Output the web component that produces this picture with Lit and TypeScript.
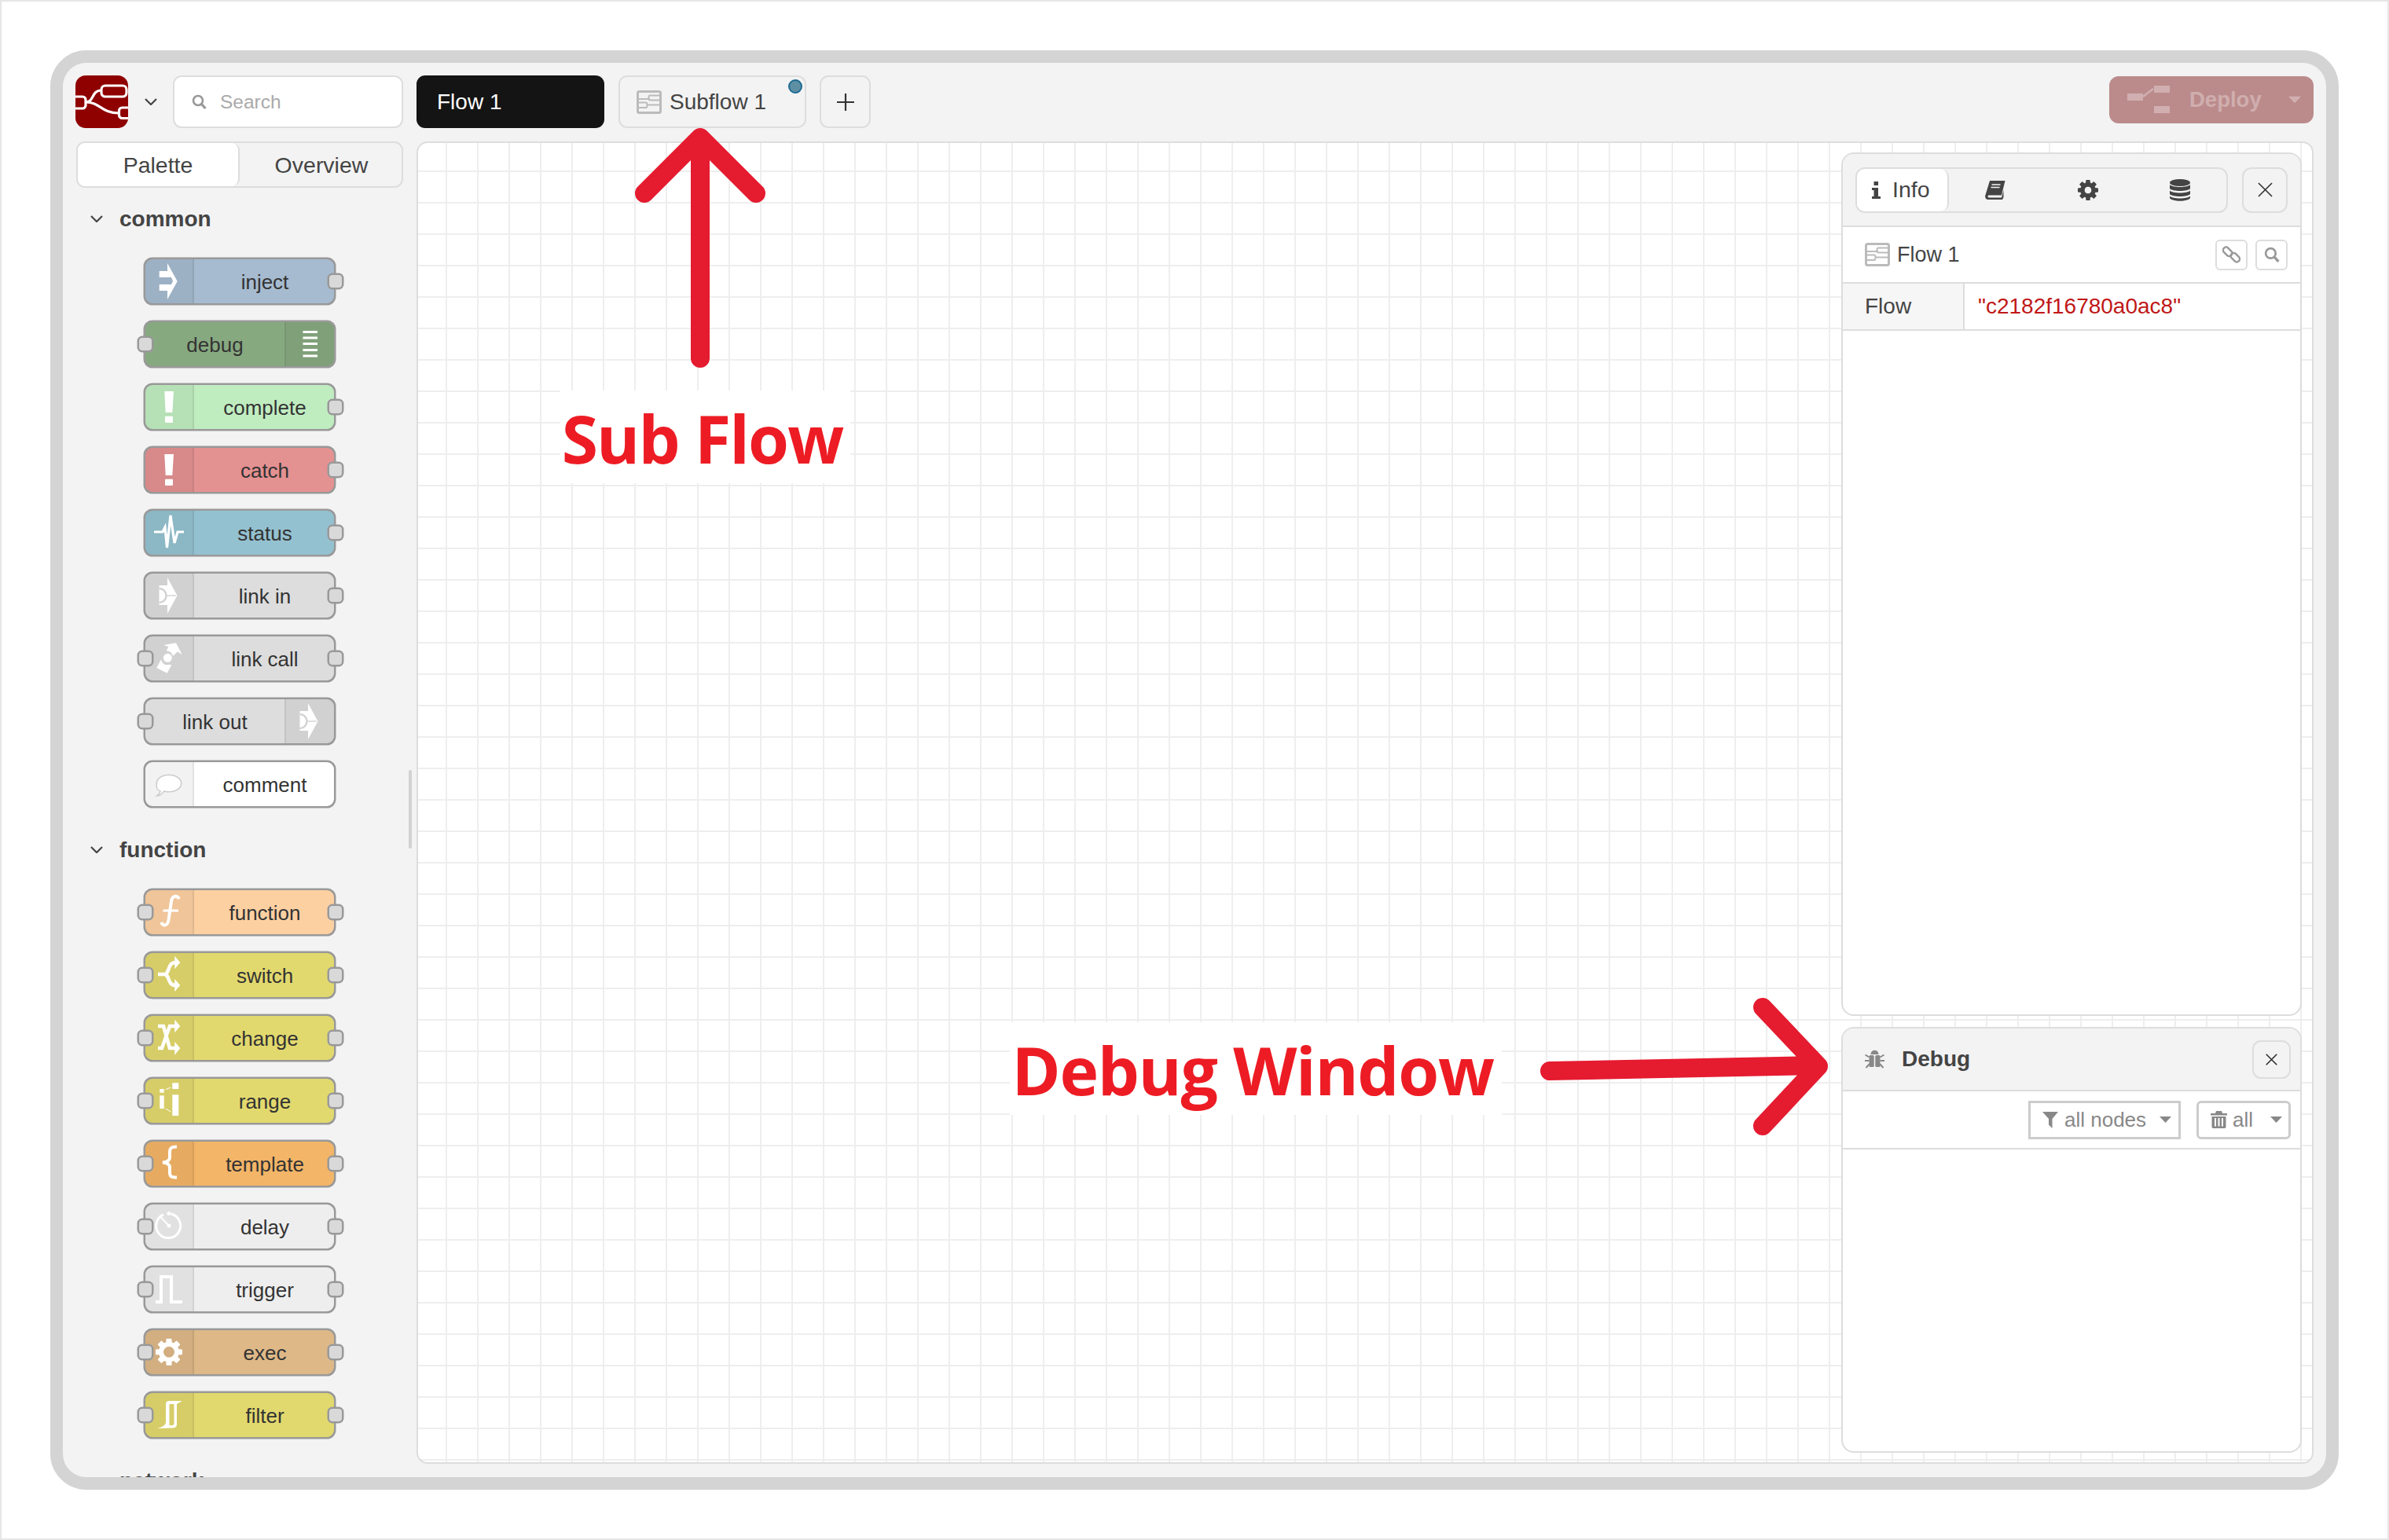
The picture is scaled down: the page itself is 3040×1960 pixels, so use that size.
import { LitElement, html, css, svg } from "lit";
import { customElement } from "lit/decorators.js";

const gear = (cx: number, cy: number, r: number, hole: number, fill: string) => {
  const body = r * 0.76;
  const w = r * 0.42;
  const teeth = [0, 45, 90, 135, 180, 225, 270, 315].map(
    (a) => svg`<rect x=${cx - w / 2} y=${cy - r} width=${w} height=${r - hole} rx="1" fill=${fill} transform="rotate(${a} ${cx} ${cy})"></rect>`
  );
  return svg`${teeth}<circle cx=${cx} cy=${cy} r=${(body + hole) / 2} fill="none" stroke=${fill} stroke-width=${body - hole}></circle>`;
};

const linkArrow = (cut: string) => svg`
  <path d="M28 5L40.5 28L28 51V40H17.5V15H28Z" fill="#fff"></path>
  <path d="M17.5 19A9 9 0 0 1 17.5 37" fill="none" stroke=${cut} stroke-width="2.400"></path>
  <path d="M26 28H39" stroke=${cut} stroke-width="1.400"></path>`;

const ICONS: Record<string, unknown> = {
  inject: svg`<path d="M28 5L40.7 28L28 51V40H17.7V32H33L35 28L33 23H17.7V15H28Z" fill="#fff"></path>`,
  debug: svg`<g fill="#fff"><rect x="21.5" y="11" width="18.5" height="3"></rect><rect x="21.5" y="18.5" width="18.5" height="3"></rect><rect x="21.5" y="26" width="18.5" height="3"></rect><rect x="21.5" y="34" width="18.5" height="3"></rect><rect x="21.5" y="41.5" width="18.5" height="3"></rect></g>`,
  alert: svg`<path d="M24.3 8H36L34.3 35H25.7Z" fill="#fff"></path><rect x="25" y="39.7" width="10" height="8.3" rx="1" fill="#fff"></rect>`,
  status: svg`<polyline points="11,27 22,27 25,21 27.5,47 32,6 37,41 41,27 49,27" fill="none" stroke="#fff" stroke-width="3.2" stroke-linejoin="miter"></polyline>`,
  linkin: linkArrow("#d2d2d2"),
  linkcall: svg`<path d="M23.3 11L39 8.3L46.7 23.3L41 19.3L35 25A9 9 0 0 0 26.7 18.3L29.3 13.3Z" fill="#fff"></path><circle cx="28.3" cy="27.3" r="5.5" fill="#fff"></circle><path d="M20 29.3A9.5 9.5 0 0 0 25 36H33.3L27.7 46.7L14.3 40Z" fill="#fff"></path>`,
  linkout: linkArrow("#d2d2d2"),
  comment: svg`<path d="M19 37C13 35 14.300 30 14.300 27C14.300 21 21 16.200 30 16.200C38.700 16.200 45.700 21 45.700 27C45.700 33 38.700 37.800 30 37.800C27.500 37.800 25 37.500 23.500 37C22 40 18 43 14.500 43C17 41 19 39 19 37Z" fill="#fff" stroke="#ccc" stroke-width="1.6"></path>`,
  function: svg`<path d="M43 11C40 6 34 7 33 14L29.5 38C28 46 23 46 20 41" fill="none" stroke="#fff" stroke-width="4"></path><path d="M22.500 26H42" stroke="#fff" stroke-width="3"></path>`,
  switch: svg`<path d="M16 27H24C31 27 28 12 38 12M24 27C31 27 28 41 38 41" fill="none" stroke="#fff" stroke-width="4.500"></path><path d="M37.300 3.700L44.300 12L37.300 20.300ZM37.300 33L44.300 41L37.300 49Z" fill="#fff"></path>`,
  change: svg`<path d="M16 13H23L31 41H38M16 41H21L31 13H38" fill="none" stroke="#fff" stroke-width="4.500"></path><path d="M37.300 4.700L44.300 13L37.300 21.300ZM37.300 33L44.300 41L37.300 49.700Z" fill="#fff"></path>`,
  range: svg`<g fill="#fff"><rect x="18.300" y="13" width="5.400" height="4.700"></rect><rect x="18.300" y="21.300" width="5.400" height="16.700"></rect><rect x="34.300" y="5.300" width="8" height="7.700"></rect><rect x="34.300" y="20.300" width="8" height="26.700"></rect></g><path d="M25.700 13.700L32.300 11M25.700 38L32.300 42" stroke="#fff" stroke-width="1"></path>`,
  template: svg`<path d="M40 6.500C32 6.500 31 9 31 14V20C31 24 28 26 22 26.500C28 27 31 29 31 33V39C31 44 32 45.500 40 45.500" fill="none" stroke="#fff" stroke-width="4"></path>`,
  delay: svg`<path d="M23 12.800A15.500 15.500 0 1 0 33 12" fill="none" stroke="#fff" stroke-width="3"></path><circle cx="30" cy="11.500" r="2.500" fill="#fff"></circle><path d="M30.500 27.500L19 15.500L18 15" stroke="#fff" stroke-width="2"></path><circle cx="30" cy="27" r="2.500" fill="#fff"></circle>`,
  trigger: svg`<path d="M13 44H20V12H33V44H47" fill="none" stroke="#fff" stroke-width="4"></path>`,
  exec: gear(30, 27.7, 17, 7, "#fff"),
  filter: svg`<path fill-rule="evenodd" d="M46.700 10L30 10Q26 10 26 14V37C26 41 20 44 14.500 45L33 44.500Q40 44.500 40 40V14ZM30.500 14H36.500V39Q36.500 41 33 41H30.500Z" fill="#fff"></path>`,
};

type NodeDef = { label: string; cls: string; icon: string; ports: string; right?: boolean };

const COMMON: NodeDef[] = [
  { label: "inject", cls: "inject", icon: "inject", ports: "o" },
  { label: "debug", cls: "debug", icon: "debug", ports: "i", right: true },
  { label: "complete", cls: "complete", icon: "alert", ports: "o" },
  { label: "catch", cls: "catch", icon: "alert", ports: "o" },
  { label: "status", cls: "status", icon: "status", ports: "o" },
  { label: "link in", cls: "link", icon: "linkin", ports: "o" },
  { label: "link call", cls: "link", icon: "linkcall", ports: "io" },
  { label: "link out", cls: "link", icon: "linkout", ports: "i", right: true },
  { label: "comment", cls: "comment", icon: "comment", ports: "" },
];
const FUNCTION: NodeDef[] = [
  { label: "function", cls: "fn", icon: "function", ports: "io" },
  { label: "switch", cls: "yellow", icon: "switch", ports: "io" },
  { label: "change", cls: "yellow", icon: "change", ports: "io" },
  { label: "range", cls: "yellow", icon: "range", ports: "io" },
  { label: "template", cls: "template", icon: "template", ports: "io" },
  { label: "delay", cls: "grey", icon: "delay", ports: "io" },
  { label: "trigger", cls: "grey", icon: "trigger", ports: "io" },
  { label: "exec", cls: "exec", icon: "exec", ports: "io" },
  { label: "filter", cls: "yellow", icon: "filter", ports: "io" },
];

const searchIcon = (c: string, w = 19) => html`<svg class="ico" width=${w} height=${w} viewBox="0 0 19 19"><circle cx="8" cy="8" r="6" fill="none" stroke=${c} stroke-width="2.600"></circle><path d="M12.500 12.500L17.500 18" stroke=${c} stroke-width="3.200"></path></svg>`;
const flowIcon = () => html`<svg class="ico" width="32" height="30" viewBox="0 0 32 30"><rect x="1.500" y="1.500" width="29" height="27" rx="2" fill="none" stroke="#bbb" stroke-width="3"></rect><path d="M2 11H17M17 6.500H30V12.500H17C15 12.500 15 6.500 17 6.500ZM2 15.500H12C14 15.500 14 22 12 22H2M13 18.500H30" fill="none" stroke="#bbb" stroke-width="2"></path></svg>`;
const caret = (c: string, w = 15, h = 8) => html`<svg class="ico" width=${w} height=${h} viewBox="0 0 15 8"><path d="M0 0H15L7.500 8Z" fill=${c}></path></svg>`;
const chevron = () => html`<svg class="ico" width="16" height="9" viewBox="0 0 16 9"><path d="M1 1L8 8L15 1" fill="none" stroke="#444" stroke-width="2.200"></path></svg>`;
const cross = (s: number, w: number) => html`<svg class="ico" width=${s} height=${s} viewBox="0 0 20 20"><path d="M1 1L19 19M19 1L1 19" stroke="#333" stroke-width=${w}></path></svg>`;

@customElement("app-root")
export class AppRoot extends LitElement {
  static styles = css`
    :host { display: block; width: 3040px; height: 1960px; font-family: "Liberation Sans", Arial, sans-serif; color: #444; }
    * { box-sizing: border-box; }
    .ico { display: block; flex: none; }
    .page { position: relative; width: 3040px; height: 1960px; border: 2px solid #e6e6e6; padding: 62px; background: #fff; }
    .frame { height: 1832px; border: 16px solid #d4d4d4; border-radius: 46px; background: #f3f3f3; overflow: hidden; padding: 16px 16px 0; }

    .header { display: flex; align-items: center; height: 67px; }
    .logo { width: 67px; height: 67px; flex: none; }
    .logo-chev { width: 57px; display: flex; justify-content: flex-start; padding-left: 21px; }
    .search { width: 293px; height: 67px; border: 2px solid #ddd; border-radius: 11px; background: #fff; display: flex; align-items: center; padding-left: 22px; gap: 17px; color: #aaa; font-size: 24.500px; }
    .tab { height: 67px; border-radius: 11px; font-size: 28px; display: flex; align-items: center; flex: none; padding-top: 1px; }
    .tab.black { width: 239px; margin-left: 17px; background: #141414; color: #fff; padding-left: 26px; }
    .tab.sub { position: relative; width: 239px; margin-left: 18px; border: 2px solid #ddd; padding-left: 21px; gap: 10px; color: #444; }
    .dot { position: absolute; right: 3px; top: 3px; width: 18px; height: 18px; border-radius: 50%; background: #5f8fa3; border: 2px solid #1f6a94; }
    .tab.add { width: 65px; margin-left: 17px; border: 2px solid #ddd; justify-content: center; }
    .deploy { margin-left: auto; margin-top: -5px; width: 260px; height: 60px; background: #bb8b8c; border-radius: 12px; display: flex; align-items: center; padding-left: 23px; color: #d0aeae; font-size: 27.500px; font-weight: 700; flex: none; }
    .deploy span { margin-left: 24px; width: 126px; }

    .body { display: flex; gap: 17px; height: 1683px; margin-top: 17px; }
    .palette { width: 416px; margin-left: 1px; flex: none; position: relative; }
    .ptabs { display: flex; height: 59px; border: 2px solid #ddd; border-radius: 11px; font-size: 28.500px; color: #444; }
    .ptab { flex: 1; display: flex; align-items: center; justify-content: center; padding: 1px 0 0 2px; }
    .ptab.on { flex: none; width: 206px; background: #fff; border-right: 2px solid #ddd; border-radius: 9px; padding-left: 0; }
    .heading { display: flex; align-items: center; height: 40px; padding-left: 18px; gap: 21px; font-size: 28px; font-weight: 700; color: #444; margin: 33px 0 30px; }
    .heading span { padding-top: 2px; }
    .heading.first { margin-top: 19px; }
    .nodes { display: flex; flex-direction: column; gap: 20px; margin-left: 86px; }
    .node { position: relative; display: flex; width: 244px; height: 60px; border: 2px solid #999; box-shadow: 0 0 0 0.500px #999; border-radius: 11px; font-size: 26px; color: #333; }
    .cell { flex: none; width: 62px; background: rgba(0, 0, 0, 0.05); border-right: 2px solid rgba(0, 0, 0, 0.07); border-radius: 9px 0 0 9px; }
    .node.right .cell { width: 63px; border-right: none; border-left: 2px solid rgba(0, 0, 0, 0.07); border-radius: 0 9px 9px 0; }
    .cell svg { display: block; overflow: visible; }
    .label { flex: 1; display: flex; align-items: center; justify-content: center; padding: 2px 0 0 2px; }
    .node.right .label { padding-left: 0; }
    .port { position: absolute; top: 18px; width: 20px; height: 20px; background: #d9d9d9; border: 2px solid #999; box-shadow: 0 0 0 0.500px #999; border-radius: 6px; }
    .port.i { left: -10px; }
    .port.o { right: -12px; }
    .inject { background: #a6bbcf; } .debug { background: #87a980; } .complete { background: #c0edc0; }
    .catch { background: #e49191; } .status { background: #94c1d0; } .link { background: #ddd; }
    .comment { background: #fff; } .fn { background: #fdd0a2; } .yellow { background: #e2d96e; }
    .template { background: #f3b567; } .grey { background: #eee; } .exec { background: #deb887; }
    .thumb { position: absolute; left: 423px; top: 800px; width: 4px; height: 100px; background: #d2d2d2; border-radius: 3px; }

    .canvas { flex: 1; height: 1683px; border: 2px solid #ddd; border-radius: 14px; background-color: #fff;
      background-image: linear-gradient(to right, #eee 2px, transparent 2px), linear-gradient(to bottom, #eee 2px, transparent 2px);
      background-size: 40px 40px; background-position: 35px 35px;
      display: flex; flex-direction: column; align-items: flex-end; gap: 14px; padding: 12px 13px 12px 0; }
    .panel { width: 586px; background: #fff; border: 2px solid #ddd; border-radius: 16px; overflow: hidden; display: flex; flex-direction: column; }
    .panel.info { height: 1099px; flex: none; }
    .panel.dbg { flex: 1; }
    .info-head { height: 93px; flex: none; background: #f3f3f3; border-bottom: 2px solid #ddd; display: flex; align-items: center; padding: 0 16px 0 16px; gap: 18px; }
    .stabs { display: flex; width: 474px; height: 58px; border: 2px solid #ddd; border-radius: 12px; }
    .stab { flex: 1; display: flex; align-items: center; justify-content: center; }
    .stab.on { flex: none; width: 117px; background: #fff; border-right: 2px solid #ddd; border-radius: 10px; gap: 15px; font-size: 28.500px; color: #444; justify-content: flex-start; padding-left: 19px; }
    .sclose { width: 58px; height: 58px; border: 2px solid #ddd; border-radius: 12px; display: flex; align-items: center; justify-content: center; }
    .flow-row { height: 72px; flex: none; border-bottom: 2px solid #ddd; display: flex; align-items: center; padding: 0 16px 0 28px; gap: 9px; font-size: 27px; color: #444; }
    .mini { width: 41px; height: 39px; border: 2px solid #ddd; border-radius: 6px; display: flex; align-items: center; justify-content: center; flex: none; }
    .mini.first { margin-left: auto; margin-right: 1px; }
    .prop { height: 60px; flex: none; border-bottom: 2px solid #ddd; display: flex; font-size: 28px; }
    .prop .k { width: 155px; background: #f6f6f6; border-right: 2px solid #ddd; display: flex; align-items: center; padding-left: 28px; color: #444; }
    .prop .v { display: flex; align-items: center; padding-left: 17px; color: #c01818; }
    .dbg-head { height: 80px; flex: none; background: #f3f3f3; border-bottom: 2px solid #ddd; display: flex; align-items: center; padding: 0 12px 0 28px; font-size: 28px; font-weight: 700; color: #444; gap: 22px; }
    .dclose { margin-left: auto; width: 49px; height: 49px; border: 2px solid #ddd; border-radius: 11px; display: flex; align-items: center; justify-content: center; }
    .toolbar { height: 74px; flex: none; border-bottom: 2px solid #ddd; display: flex; align-items: center; justify-content: flex-end; padding: 0 12px 0 0; gap: 20px; font-size: 26px; color: #888; }
    .tbtn { height: 49px; border: 3px solid #ccc; display: flex; align-items: center; flex: none; }
    .tbtn.nodes-btn { width: 194px; padding-left: 15px; gap: 8px; }
    .tbtn.all { width: 120px; border-radius: 6px; padding-left: 15px; gap: 7px; }
    .tbtn.nodes-btn .car-wrap { margin-left: auto; margin-right: 9px; }
    .tbtn.all .car-wrap { margin-left: auto; margin-right: 8px; }

    .overlay { position: absolute; left: -2px; top: -2px; width: 3040px; height: 1960px; pointer-events: none; }
    .overlay svg { position: absolute; left: 0; top: 0; }
    .note { position: absolute; background: #fff; color: #ed1c24; font-family: "Open Sans", sans-serif; font-weight: 700; font-size: 84px; line-height: 1; display: flex; align-items: center; justify-content: center; white-space: nowrap; }
    .note.a { left: 713px; top: 497px; width: 369px; height: 118px; letter-spacing: -1.800px; padding: 4px 8px 0 0; }
    .note.b { left: 1285px; top: 1301px; width: 626px; height: 118px; letter-spacing: -1.300px; padding: 4px 8px 0 0; }
  `;

  private node(n: NodeDef) {
    const cell = html`<div class="cell"><svg width="60" height="56" viewBox="0 0 60 56">${ICONS[n.icon]}</svg></div>`;
    const label = html`<div class="label">${n.label}</div>`;
    return html`<div class="node ${n.cls} ${n.right ? "right" : ""}">
      ${n.right ? html`${label}${cell}` : html`${cell}${label}`}
      ${n.ports.includes("i") ? html`<div class="port i"></div>` : ""}
      ${n.ports.includes("o") ? html`<div class="port o"></div>` : ""}
    </div>`;
  }

  render() {
    return html`<div class="page">
      <div class="frame">
        <div class="header">
          <svg class="logo" viewBox="0 0 67 67">
            <defs><clipPath id="lc"><rect width="67" height="67" rx="13"></rect></clipPath></defs>
            <g clip-path="url(#lc)">
              <rect width="67" height="67" fill="#8f0000"></rect>
              <g fill="none" stroke="#fff" stroke-width="3.200">
                <rect x="33" y="13" width="32" height="14" rx="5"></rect>
                <rect x="-6" y="27" width="19" height="15" rx="4"></rect>
                <rect x="55.500" y="41" width="19" height="13.500" rx="4"></rect>
                <path d="M13 34C24 34 20 19 33 19M13 34C32 34 32 48 55.500 48"></path>
              </g>
            </g>
          </svg>
          <div class="logo-chev">${chevron()}</div>
          <div class="search">${searchIcon("#999")}<span>Search</span></div>
          <div class="tab black">Flow 1</div>
          <div class="tab sub">${flowIcon()}<span>Subflow 1</span><div class="dot"></div></div>
          <div class="tab add"><svg class="ico" width="22" height="22" viewBox="0 0 22 22"><path d="M11 0V22M0 11H22" stroke="#333" stroke-width="2.200"></path></svg></div>
          <div class="deploy">
            <svg class="ico" width="55" height="36" viewBox="0 0 55 36"><g fill="#d1afb0"><rect x="0" y="10" width="20" height="9"></rect><rect x="34" y="0" width="20" height="9"></rect><rect x="34" y="26" width="20" height="9"></rect></g><path d="M20 14L33 4" stroke="#d1afb0" stroke-width="2.500"></path></svg>
            <span>Deploy</span>${caret("#d1afb0", 16, 10)}
          </div>
        </div>
        <div class="body">
          <div class="palette">
            <div class="ptabs"><div class="ptab on">Palette</div><div class="ptab">Overview</div></div>
            <div class="heading first">${chevron()}<span>common</span></div>
            <div class="nodes">${COMMON.map((n) => this.node(n))}</div>
            <div class="heading">${chevron()}<span>function</span></div>
            <div class="nodes">${FUNCTION.map((n) => this.node(n))}</div>
            <div class="heading">${chevron()}<span>network</span></div>
            <div class="thumb"></div>
          </div>
          <div class="canvas">
            <div class="panel info">
              <div class="info-head">
                <div class="stabs">
                  <div class="stab on"><svg class="ico" width="11" height="22" viewBox="0 0 11 22"><path d="M2.500 0H8V5H2.500ZM0 8H8V19H11V22H0V19H2.500V11H0Z" fill="#444"></path></svg><span>Info</span></div>
                  <div class="stab"><svg class="ico" width="26" height="24" viewBox="0 0 26 24"><path d="M6 0H25.500L21 18.500H5C3 18.500 3 21.500 5 21.500H21L23.500 12V21L22 24H4C0.500 24 -0.500 20.500 0.500 18Z" fill="#444"></path><path d="M8.500 5H19.500M7.500 8.500H18.500" stroke="#f3f3f3" stroke-width="1.500"></path></svg></div>
                  <div class="stab"><svg class="ico" width="26" height="26" viewBox="0 0 26 26">${gear(13, 13, 13, 4.5, "#444")}</svg></div>
                  <div class="stab"><svg class="ico" width="26" height="28" viewBox="0 0 26 28"><g fill="#444"><ellipse cx="13" cy="4.500" rx="13" ry="4.500"></ellipse><path d="M0 7C3 11 23 11 26 7V12C23 16 3 16 0 12Z"></path><path d="M0 14.500C3 18.500 23 18.500 26 14.500V19C23 23 3 23 0 19Z"></path><path d="M0 21.500C3 25.500 23 25.500 26 21.500V24C23 29 3 29 0 24Z"></path></g></svg></div>
                </div>
                <div class="sclose">${cross(19, 1.700)}</div>
              </div>
              <div class="flow-row">${flowIcon()}<span>Flow 1</span>
                <div class="mini first"><svg class="ico" width="23" height="22" viewBox="0 0 23 22"><g fill="none" stroke="#999" stroke-width="2.400"><rect x="0" y="3.500" width="13" height="7.500" rx="3.500" transform="rotate(45 6.500 7.500)"></rect><rect x="10" y="11" width="13" height="7.500" rx="3.500" transform="rotate(45 16.500 14.500)"></rect></g></svg></div>
                <div class="mini">${searchIcon("#999", 20)}</div>
              </div>
              <div class="prop"><div class="k">Flow</div><div class="v">"c2182f16780a0ac8"</div></div>
            </div>
            <div class="panel dbg">
              <div class="dbg-head">
                <svg class="ico" width="25" height="25" viewBox="0 0 25 25"><g fill="#888"><path d="M7.500 6C7.500 -1 17.500 -1 17.500 6Z"></path><rect x="5.500" y="7" width="6.200" height="15" rx="1.500"></rect><rect x="13.300" y="7" width="6.200" height="15" rx="1.500"></rect></g><path d="M0.500 6.500L5.500 9.500M24.500 6.500L19.500 9.500M0 14H5.500M25 14H19.500M1.500 23L6 18M23.500 23L19 18" stroke="#888" stroke-width="2"></path></svg>
                <span>Debug</span>
                <div class="dclose">${cross(15, 2.200)}</div>
              </div>
              <div class="toolbar">
                <div class="tbtn nodes-btn"><svg class="ico" width="20" height="21" viewBox="0 0 20 21"><path d="M0 0H20L12.500 9V21L8 16.500V9Z" fill="#888"></path></svg><span>all nodes</span><div class="car-wrap">${caret("#888", 15, 8)}</div></div>
                <div class="tbtn all"><svg class="ico" width="21" height="22" viewBox="0 0 21 22"><path d="M7 0H14L15 3H21V5.500H0V3H6ZM1.500 7H19.500V20C19.500 21.500 18.500 22 17.500 22H3.500C2.500 22 1.500 21.500 1.500 20ZM5 9V19.500H7V9ZM9.500 9V19.500H11.500V9ZM14 9V19.500H16V9Z" fill="#888" fill-rule="evenodd"></path></svg><span>all</span><div class="car-wrap">${caret("#888", 15, 8)}</div></div>
              </div>
            </div>
          </div>
        </div>
      </div>
      <div class="overlay">
        <div class="note a">Sub Flow</div>
        <div class="note b">Debug Window</div>
        <svg width="3040" height="1960" viewBox="0 0 3040 1960">
          <g fill="none" stroke="#e51b30" stroke-width="24" stroke-linecap="round" stroke-linejoin="round">
            <path d="M891 456V176M820 246L891 175L962 246"></path>
            <path d="M1972 1363L2310 1356M2243 1282L2314 1357L2243 1433"></path>
          </g>
        </svg>
      </div>
    </div>`;
  }
}
